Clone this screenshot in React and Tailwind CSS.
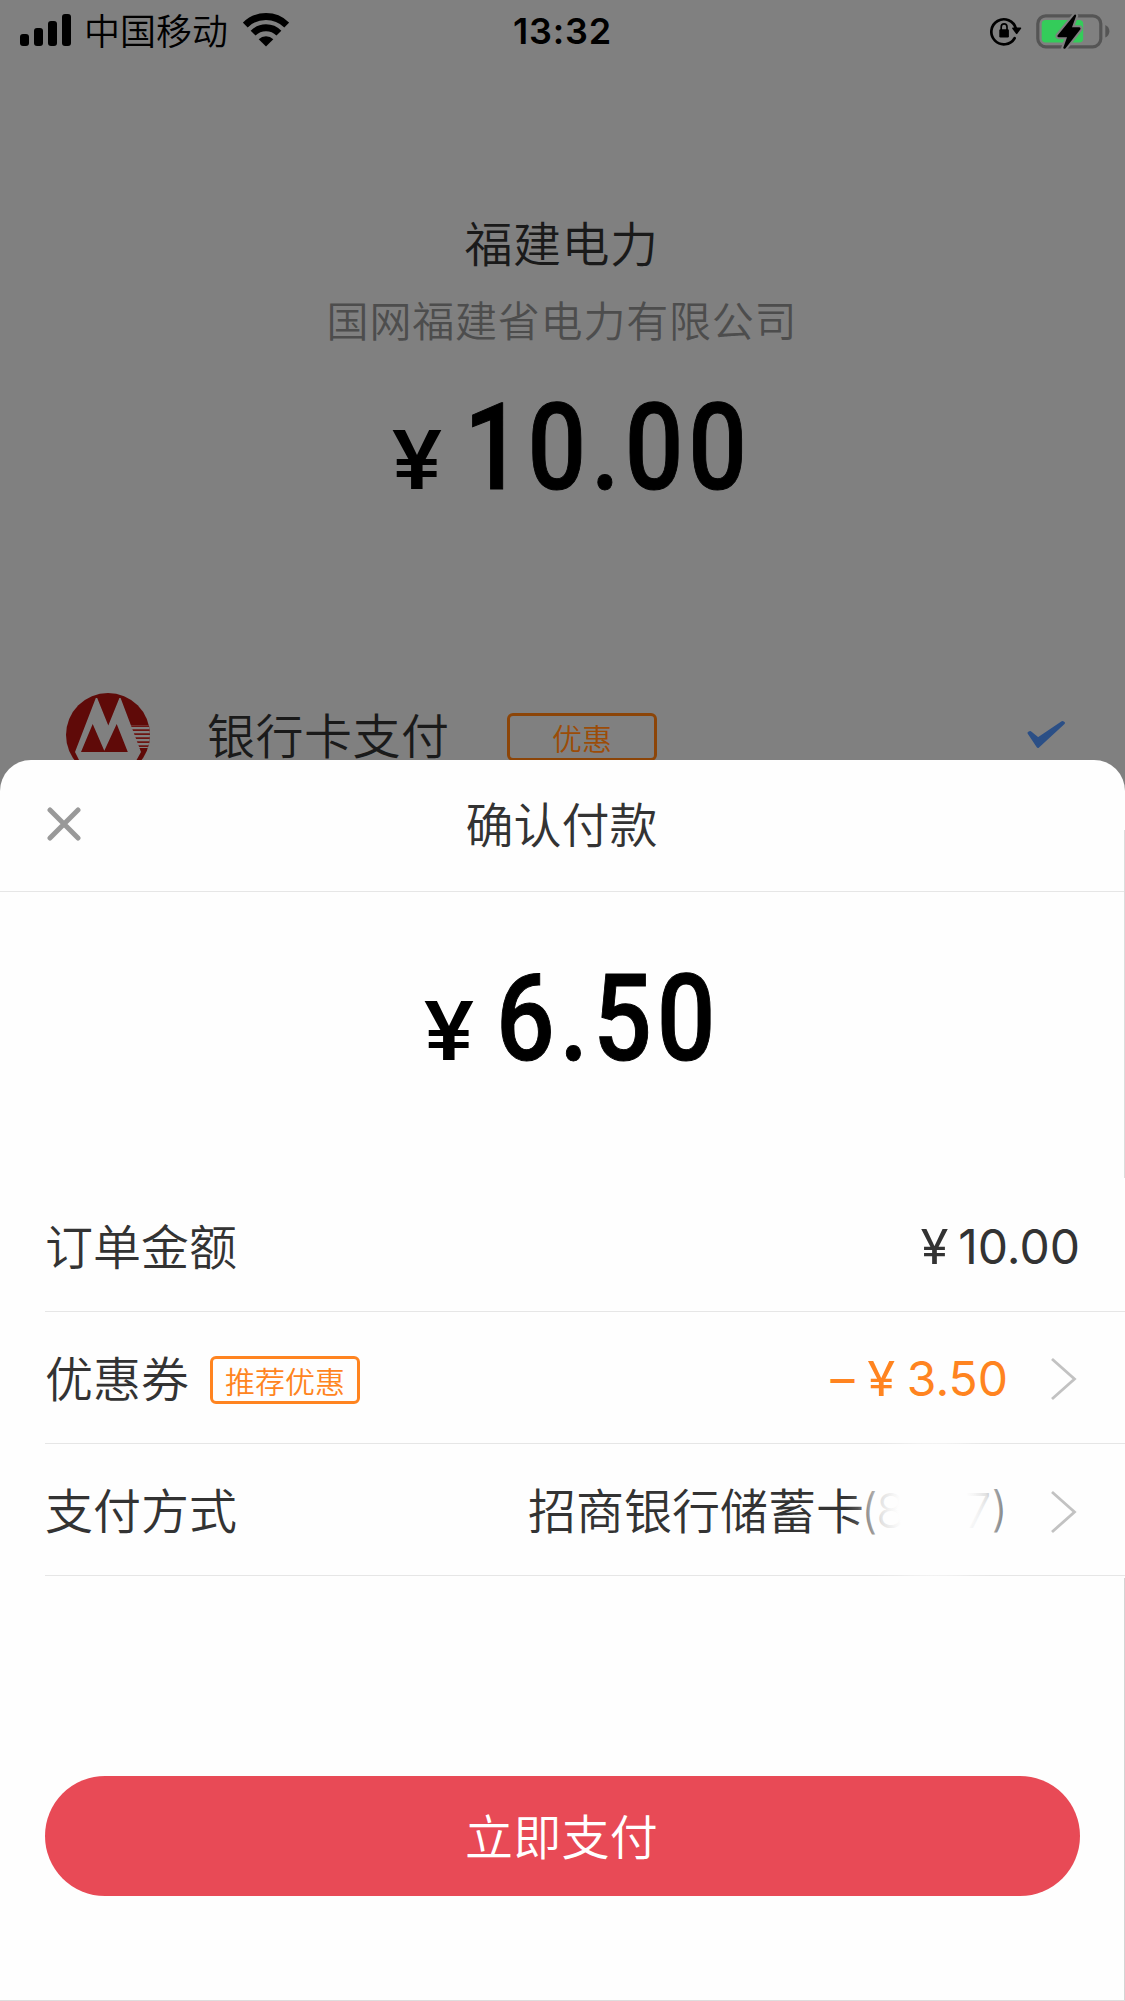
import React from "react";

const CJK = "font-['Noto_Sans_CJK_SC',sans-serif]";

function SignalBars() {
  return (
    <div className="flex h-8 w-[51px] items-end justify-between">
      <i className="h-3 w-[9px] rounded-[3px] bg-black" />
      <i className="h-[18px] w-[9px] rounded-[3px] bg-black" />
      <i className="h-[25px] w-[9px] rounded-[3px] bg-black" />
      <i className="h-8 w-[9px] rounded-[3px] bg-black" />
    </div>
  );
}

function Wifi() {
  return (
    <svg width="46" height="34" viewBox="0 0 46 34" className="block">
      <g fill="none" stroke="#000" strokeWidth="6.8">
        <path d="M2.3 12A29.5 29.5 0 0 1 43.7 12" />
        <path d="M10.1 20.2A18 18 0 0 1 35.9 20.2" />
      </g>
      <path d="M23 33.4L15.7 26.2A10.3 10.3 0 0 1 30.3 26.2Z" />
    </svg>
  );
}

function RotationLock() {
  return (
    <svg width="32" height="30" viewBox="0 0 32 30" className="block">
      <path d="M24.6 22.2A12.5 12.5 0 1 1 25.9 12.5" fill="none" stroke="#000" strokeWidth="2.7" strokeLinecap="round" />
      <path d="M22.8 11.5H30.6Q31.6 11.7 31 12.8L27.3 17.8Q26.6 18.6 26 17.8L22.3 12.8Q21.8 11.8 22.8 11.5Z" />
      <rect x="9.3" y="13.2" width="9.6" height="8.3" rx="1.2" />
      <path d="M11.2 14V11Q11.2 7.9 14.1 7.9T17 11V14" fill="none" stroke="#000" strokeWidth="1.7" />
    </svg>
  );
}

function Battery() {
  return (
    <svg width="75" height="38" viewBox="0 0 75 38" className="block">
      <rect x="1.8" y="3.8" width="63" height="31" rx="8" fill="none" stroke="#555" strokeWidth="3.2" />
      <path d="M69.3 13Q73.4 15 73.4 19.3T69.3 25.6Z" fill="#555" />
      <rect x="5.7" y="8" width="41.5" height="22.4" rx="4" fill="#34cc5a" />
      <path d="M38.5 2.8L21.5 23.4Q21 25 22.5 25.2H31L27.2 36Q28 37.5 29.6 36.2L44.4 17.2Q45 15.5 43.5 15.2H36L40.2 3.8Q39.8 2 38.5 2.8Z" fill="#000" stroke="#808080" strokeWidth="4" paintOrder="stroke" />
    </svg>
  );
}

function BankLogo() {
  return (
    <svg width="84" height="84" viewBox="66 693 84 84" className="block shrink-0">
      <defs>
        <clipPath id="disc"><circle cx="108" cy="735" r="42" /></clipPath>
      </defs>
      <g clipPath="url(#disc)">
        <rect x="66" y="693" width="84" height="84" fill="#5f0a08" />
        <path d="M129 725H152V748H138Z" fill="#808080" />
        <path d="M130 726.2H152M131.5 730.2H152M133 734.2H152M134.5 738.2H152M136 742.2H152M138 746.2H152" stroke="#6c1512" strokeWidth="1.8" />
        <path d="M95.8 698H97.2L108.3 725.5L119.4 698H120.6L141 752L136 761L130 768H86L79 760L75 752Z" fill="#808080" />
        <path d="M81 752L92.7 724L104.3 750.7L116.7 724L127.8 752Z" fill="#5f0a08" />
      </g>
    </svg>
  );
}

function Chevron() {
  return (
    <svg width="27" height="44" viewBox="0 0 27 44" className="block" fill="none" stroke="#c2c2c2" strokeWidth="2.8">
      <path d="M2 2L24.5 22L2 42" />
    </svg>
  );
}

// Large condensed amount: currency sign followed by digits.
function Amount({ value, width }) {
  return (
    <div className="flex h-[120px] items-baseline font-['Roboto',sans-serif] font-medium leading-[120px] text-black">
      <span className="inline-block w-[52px] origin-left scale-x-[1.12] text-[84px]">¥</span>
      <span className={"ml-[20px] inline-block origin-left scale-x-[0.86] whitespace-nowrap text-[120px] tracking-[5.7px] [-webkit-text-stroke:1px_black] " + width}>
        {value}
      </span>
    </div>
  );
}

function Row({ label, children }) {
  return (
    <div className="ml-[45px] flex h-[132px] items-center justify-between border-b border-[#e6e6e6] pr-[45px]">
      {label}
      {children}
    </div>
  );
}

export default function App() {
  return (
    <div className={"relative flex h-[2001px] w-[1125px] flex-col overflow-hidden bg-[#808080] text-[48px] font-[350] text-[#333] " + CJK}>
      <header className="flex h-[60px] shrink-0 items-center pl-5 pr-[14px]">
        <div className="flex w-[493px] items-center">
          <SignalBars />
          <span className="ml-[13px] h-[62px] text-[36px] leading-[60px] text-black">中国移动</span>
          <span className="ml-[15px]"><Wifi /></span>
        </div>
        <span className="mt-[2px] font-['Inter',sans-serif] text-[36px] font-semibold leading-[60px] tracking-[0.8px] text-black">13:32</span>
        <div className="ml-auto mt-[2px] flex items-center gap-[14px]">
          <RotationLock />
          <Battery />
        </div>
      </header>

      <section className="flex h-[700px] shrink-0 flex-col items-center">
        <h1 className="mt-[145px] h-[72px] pr-[2px] text-[48px] leading-[72px] tracking-[0.5px] text-[#1a1a1a]">福建电力</h1>
        <p className="mt-[10px] h-[64px] pr-[1px] text-[42px] leading-[64px] tracking-[0.8px] text-[#4d4d4d]">国网福建省电力有限公司</p>
        <div className="mt-[37px] flex w-full pl-[392px]">
          <Amount value="10.00" width="w-[300px]" />
        </div>
        <div className="mt-[185px] flex w-full items-start">
          <div className="ml-[66px]"><BankLogo /></div>
          <span className="ml-[57px] mt-[4px] h-[72px] w-[300px] leading-[72px] tracking-[0.5px] text-[#1a1a1a]">银行卡支付</span>
          <span className="mt-[20px] flex h-12 w-[150px] items-center justify-center rounded-md border-[3px] border-[#8c4508] text-[30px] leading-none text-[#9c4c07]">优惠</span>
          <svg width="42" height="30" viewBox="0 0 42 30" className="ml-[368px] mt-[27px] block" fill="#2b4f86" stroke="#2b4f86" strokeWidth="3" strokeLinejoin="round">
            <path d="M4 13L13 26.5L38.5 3L37.5 2.5L13 19L5 12.5Z" />
          </svg>
        </div>
      </section>

      <main className="relative flex flex-1 flex-col rounded-t-[31px] border-b border-[#ddd] bg-[#fefefe]">
        <div className="grid h-[132px] shrink-0 grid-cols-[1fr_auto_1fr] items-center border-b border-[#e6e6e6]">
          <svg width="34" height="34" viewBox="0 0 34 34" className="-mt-[4px] ml-[47px] block" stroke="#999" strokeWidth="5" strokeLinecap="round">
            <path d="M3 3L31 31M31 3L3 31" />
          </svg>
          <h2 className="-mt-[8px] pr-[2px] leading-[72px]">确认付款</h2>
        </div>
        <div className="mt-[67px] flex w-full pl-[424px]">
          <Amount value="6.50" width="w-[240px]" />
        </div>

        <div className="mt-[101px]">
          <Row label={<span className="-mt-[3px] leading-[72px]">订单金额</span>}>
            <span className="mt-[2px] flex font-['Inter',sans-serif] font-[380] leading-[72px]">
              <span className="mr-[10px] inline-block origin-right scale-x-[1.06]">¥</span>10.00
            </span>
          </Row>
          <Row
            label={
              <div className="flex items-center">
                <span className="-mt-[3px] leading-[72px]">优惠券</span>
                <span className="ml-[21px] mt-[5px] flex h-12 w-[150px] items-center justify-center rounded-md border-[3px] border-[#ff8420] text-[30px] leading-none text-[#ff8420]">推荐优惠</span>
              </div>
            }
          >
            <div className="mt-[3px] flex items-center">
              <span className="flex font-['Inter',sans-serif] font-[380] leading-[72px] text-[#ff8420]">
                <span className="mr-[14px]">–</span>
                <span className="mr-[12px] inline-block scale-x-[1.06]">¥</span>3.50
              </span>
              <span className="ml-[42px] mr-[3px]"><Chevron /></span>
            </div>
          </Row>
          <Row label={<span className="-mt-[3px] leading-[72px]">支付方式</span>}>
            <div className="relative flex items-center">
              <span className="-mt-[3px] leading-[72px]">招商银行储蓄卡</span>
              <span className="-ml-[3px] mt-[2px] flex w-[147px] justify-between font-['Inter',sans-serif] leading-[72px]">
                <span className="tracking-[-1.5px]">(8</span>
                <span>7)</span>
              </span>
              <span className="ml-[42px] mr-[3px] mt-[4px]"><Chevron /></span>
              <i className="absolute left-[313px] top-[-57px] h-[186px] w-[186px] rounded-full bg-[radial-gradient(closest-side,#fefefe_38%,#fefefef4_46%,#fefefedc_58%,#fefefe80_71%,#fefefe28_82%,#fefefe00_95%)]" />
            </div>
          </Row>
        </div>

        <button className="mx-[45px] mt-[200px] h-[120px] rounded-full bg-[#e84a56] pb-[4px] pr-[2px] leading-[116px] tracking-[0.3px] text-white">立即支付</button>
        <i className="absolute right-0 top-[70px] h-[348px] w-px bg-[#dcdcdc]" />
        <i className="absolute bottom-0 right-0 top-[818px] w-px bg-[#d4d4d4]" />
      </main>
    </div>
  );
}
